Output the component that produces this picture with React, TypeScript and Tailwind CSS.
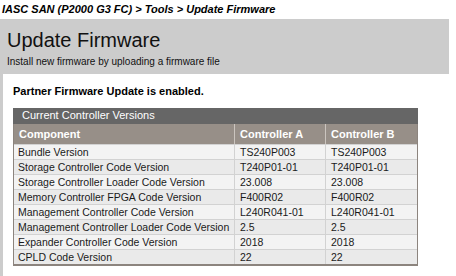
import React from 'react';

const rows: [string, string, string][] = [
  ['Bundle Version', 'TS240P003', 'TS240P003'],
  ['Storage Controller Code Version', 'T240P01-01', 'T240P01-01'],
  ['Storage Controller Loader Code Version', '23.008', '23.008'],
  ['Memory Controller FPGA Code Version', 'F400R02', 'F400R02'],
  ['Management Controller Code Version', 'L240R041-01', 'L240R041-01'],
  ['Management Controller Loader Code Version', '2.5', '2.5'],
  ['Expander Controller Code Version', '2018', '2018'],
  ['CPLD Code Version', '22', '22'],
];

export default function App() {
  return (
    <div className="w-[456px] h-[276px] overflow-hidden bg-white text-black font-['Liberation_Sans',Arial,sans-serif]">
      {/* Breadcrumb */}
      <div className="h-[19px] pl-[2px] pt-[4px] text-[11px] font-bold italic leading-none">
        IASC SAN (P2000 G3 FC) &gt; Tools &gt; Update Firmware
      </div>

      {/* Page header */}
      <div className="w-[449px] h-[55px] bg-[#cccccc] pl-[7px] pt-[11px]">
        <h1 className="text-[20px] leading-[20px] text-[#111]">Update Firmware</h1>
        <p className="mt-[7px] text-[10px] leading-[10px] text-[#111]">
          Install new firmware by uploading a firmware file
        </p>
      </div>

      {/* Content */}
      <div className="w-[449px] h-[202px] border-l-[3px] border-[#cccccc] pl-[10px] pt-[12px]">
        <p className="text-[11px] font-bold leading-[11px]">Partner Firmware Update is enabled.</p>

        <div className="mt-[11px] w-[405px]">
          <div className="h-[16px] bg-[#666666] pl-[9px] text-[11px] leading-[15px] text-white">
            Current Controller Versions
          </div>
          <div className="border-x border-b-2 border-[#8c847e]">
            <div className="flex h-[20px] bg-[#978f88] text-[11px] font-bold leading-[20px] text-white">
              <div className="w-[221px] border-r border-[#cbc5bf] pl-[5px]">Component</div>
              <div className="w-[91px] border-r border-[#cbc5bf] pl-[5px]">Controller A</div>
              <div className="w-[91px] pl-[5px]">Controller B</div>
            </div>
            {rows.map((r, i) => (
              <div
                key={r[0]}
                className={`flex h-[15px] border-t border-[#d2d2d2] text-[10.5px] leading-[14px] text-[#1a1a1a] ${
                  i % 2 === 0 ? 'bg-[#f3f3f3]' : 'bg-[#eaeaea]'
                }`}
              >
                <div className="w-[221px] border-r border-[#d2d2d2] pl-[4px] whitespace-nowrap">{r[0]}</div>
                <div className="w-[91px] border-r border-[#d2d2d2] pl-[5px]">{r[1]}</div>
                <div className="w-[91px] pl-[5px]">{r[2]}</div>
              </div>
            ))}
          </div>
        </div>
      </div>
    </div>
  );
}
